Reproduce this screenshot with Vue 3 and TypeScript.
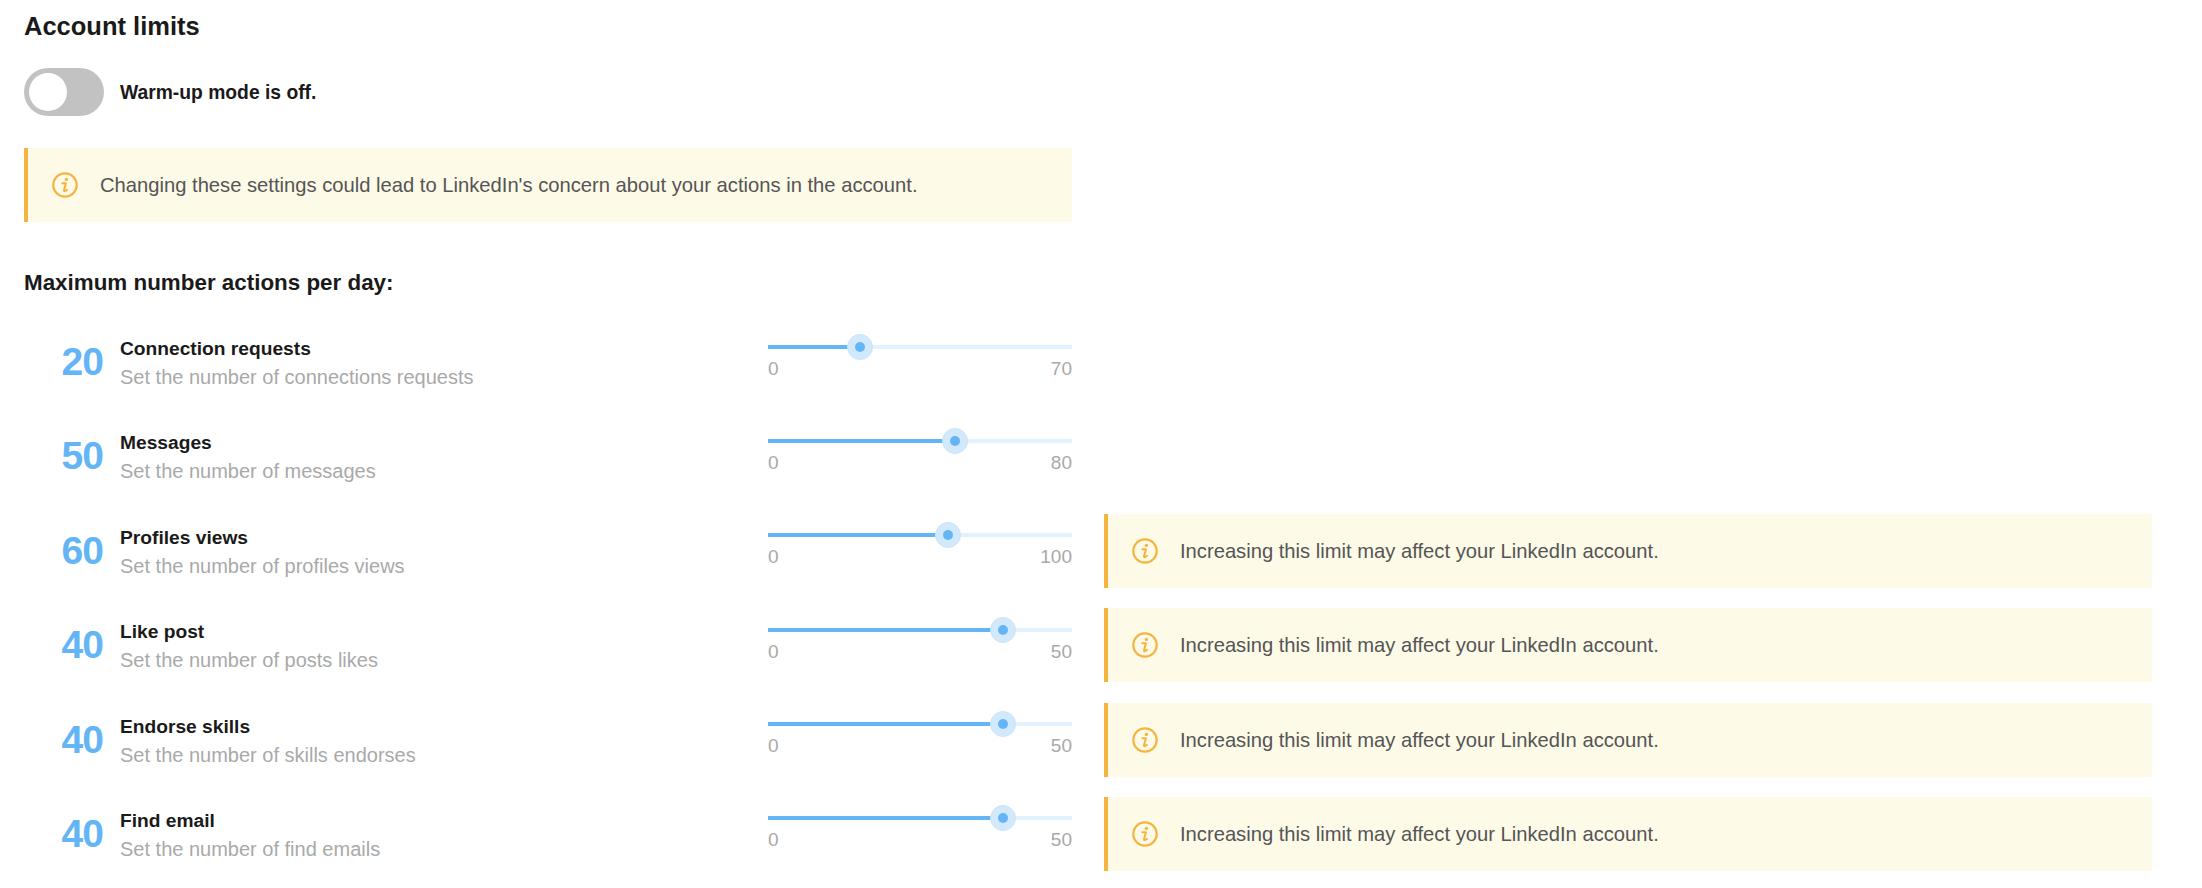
<script setup lang="ts">
interface Limit {
  value: number
  max: number
  title: string
  hint: string
  warn: boolean
}

const limits: Limit[] = [
  { value: 20, max: 70, title: 'Connection requests', hint: 'Set the number of connections requests', warn: false },
  { value: 50, max: 80, title: 'Messages', hint: 'Set the number of messages', warn: false },
  { value: 60, max: 100, title: 'Profiles views', hint: 'Set the number of profiles views', warn: true },
  { value: 40, max: 50, title: 'Like post', hint: 'Set the number of posts likes', warn: true },
  { value: 40, max: 50, title: 'Endorse skills', hint: 'Set the number of skills endorses', warn: true },
  { value: 40, max: 50, title: 'Find email', hint: 'Set the number of find emails', warn: true }
]

const thumbCentre = (l: Limit): string => `calc(13px + (100% - 26px) * ${l.value / l.max})`
</script>

<template>
  <main class="page">
    <h1 class="title">Account limits</h1>
    <div class="warmup">
      <span class="toggle"><span class="knob"></span></span>
      <span class="warmup-text">Warm-up mode is off.</span>
    </div>
    <div class="alert alert-top">
      <svg class="info" viewBox="0 0 26 26" fill="none">
        <circle cx="13" cy="13" r="11.7" stroke="currentColor" stroke-width="2.2" />
        <circle cx="14.4" cy="7.4" r="1.7" fill="currentColor" />
        <path d="M10.3 11.2h3.6l-1.9 7c-.2 1 .6 1.3 1.3.8l1.6-1.1" stroke="currentColor" stroke-width="2" stroke-linecap="round" stroke-linejoin="round" />
      </svg>
      <span class="alert-text">Changing these settings could lead to LinkedIn's concern about your actions in the account.</span>
    </div>
    <h2 class="subtitle">Maximum number actions per day:</h2>
    <section class="rows">
      <div v-for="l in limits" :key="l.title" class="row">
        <div class="value">{{ l.value }}</div>
        <div class="labels">
          <div class="label">{{ l.title }}</div>
          <div class="hint">{{ l.hint }}</div>
        </div>
        <div class="slider">
          <div class="track">
            <div class="fill" :style="{ width: thumbCentre(l) }"></div>
            <div class="thumb" :style="{ left: thumbCentre(l) }"><span class="dot"></span></div>
          </div>
          <div class="scale"><span>0</span><span>{{ l.max }}</span></div>
        </div>
        <div v-if="l.warn" class="alert alert-row">
          <svg class="info" viewBox="0 0 26 26" fill="none">
            <circle cx="13" cy="13" r="11.7" stroke="currentColor" stroke-width="2.2" />
            <circle cx="14.4" cy="7.4" r="1.7" fill="currentColor" />
            <path d="M10.3 11.2h3.6l-1.9 7c-.2 1 .6 1.3 1.3.8l1.6-1.1" stroke="currentColor" stroke-width="2" stroke-linecap="round" stroke-linejoin="round" />
          </svg>
          <span class="alert-text">Increasing this limit may affect your LinkedIn account.</span>
        </div>
      </div>
    </section>
  </main>
</template>

<style scoped>
.page {
  width: 2202px;
  height: 888px;
  box-sizing: border-box;
  padding: 12px 50px 0 24px;
  overflow: hidden;
  background: #fff;
  font-family: "Liberation Sans", Arial, sans-serif;
  color: #1a1a1a;
}
.title {
  margin: 0;
  font-size: 25.5px;
  line-height: 28px;
  font-weight: 700;
}
.warmup {
  display: flex;
  align-items: center;
  gap: 16px;
  margin-top: 28px;
}
.toggle {
  display: flex;
  align-items: center;
  box-sizing: border-box;
  width: 80px;
  height: 48px;
  padding-left: 5px;
  border-radius: 24px;
  background: #c2c2c2;
}
.knob {
  width: 38px;
  height: 38px;
  border-radius: 50%;
  background: #fff;
}
.warmup-text {
  margin-top: 2px;
  font-size: 19.3px;
  font-weight: 700;
}
.alert {
  display: flex;
  align-items: center;
  box-sizing: border-box;
  height: 74px;
  padding-left: 24px;
  gap: 22px;
  border-left: 4px solid #f7b33f;
  background: #fdfae8;
  color: #555;
  font-size: 20.2px;
}
.alert-text {
  margin-top: 1px;
}
.alert-top {
  width: 1048px;
  margin-top: 32px;
}
.alert-row {
  flex: 1;
  margin: -1px 0 0 32px;
}
.info {
  width: 26px;
  height: 26px;
  flex: none;
  color: #f7b33f;
}
.subtitle {
  margin: 48px 0 0;
  font-size: 22.4px;
  line-height: 26px;
  font-weight: 700;
}
.rows {
  display: flex;
  flex-direction: column;
  gap: 20.4px;
  margin-top: 30px;
}
.row {
  display: flex;
  align-items: flex-start;
  height: 74px;
}
.value {
  width: 79px;
  margin-top: 12px;
  margin-right: 1px;
  text-align: right;
  font-size: 39px;
  line-height: 48px;
  font-weight: 700;
  letter-spacing: -1px;
  color: #64b5f6;
}
.labels {
  width: 648px;
  margin-left: 16px;
}
.label {
  margin-top: 11px;
  font-size: 19.2px;
  line-height: 24px;
  font-weight: 700;
}
.hint {
  margin-top: 4px;
  font-size: 20px;
  line-height: 24px;
  color: #a9a9a9;
}
.slider {
  width: 304px;
  flex: none;
  padding-top: 18.5px;
}
.track {
  position: relative;
  height: 4px;
  background: #e1f1fd;
}
.fill {
  height: 100%;
  background: #64b5f6;
}
.thumb {
  position: absolute;
  top: 50%;
  display: flex;
  align-items: center;
  justify-content: center;
  box-sizing: border-box;
  width: 26px;
  height: 26px;
  border: 1px solid #c9e4fb;
  border-radius: 50%;
  background: #d2e9fc;
  transform: translate(-50%, -50%);
}
.dot {
  width: 10px;
  height: 10px;
  border-radius: 50%;
  background: #64b5f6;
}
.scale {
  display: flex;
  justify-content: space-between;
  margin-top: 9px;
  font-size: 19px;
  line-height: 22px;
  color: #a9a9a9;
}
</style>
